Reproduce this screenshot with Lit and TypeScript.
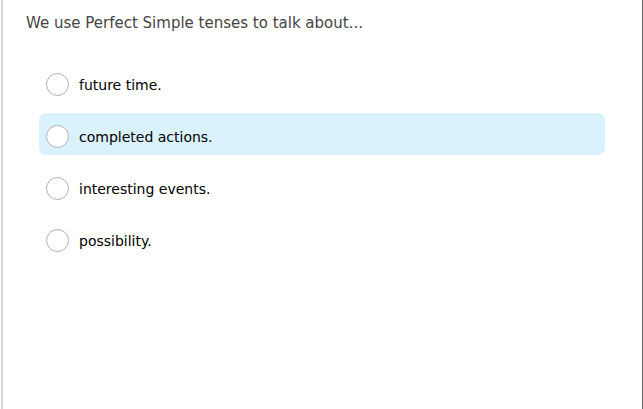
import { LitElement, html, css } from "lit";
import { customElement, state } from "lit/decorators.js";

@customElement("app-root")
export class AppRoot extends LitElement {
  static styles = css`
    :host {
      display: block;
      font-family: Verdana, "DejaVu Sans", sans-serif;
      color: #000;
      background: #fff;
    }
    .panel {
      box-sizing: border-box;
      min-height: 100vh;
      margin-left: 1px;
      padding: 13px 37px 24px 23px;
      border: 0 solid #d4d4d4;
      border-left-width: 2px;
      border-right: 1px solid #666;
    }
    fieldset {
      margin: 0;
      padding: 0;
      border: 0;
      min-width: 0;
    }
    legend {
      padding: 0;
      margin-bottom: 28px;
      font-size: 15px;
      line-height: 20px;
      color: #444;
    }
    .options {
      display: flex;
      flex-direction: column;
      gap: 10px;
      margin-left: 13px;
    }
    .option {
      box-sizing: border-box;
      display: flex;
      align-items: center;
      gap: 10px;
      height: 42px;
      padding: 5px 7px 0;
      border-radius: 7px;
      font-size: 14px;
      line-height: 20px;
      cursor: pointer;
    }
    .option span {
      padding-top: 1px;
    }
    .highlighted {
      background: #daf2fd;
    }
    .radio {
      appearance: none;
      box-sizing: border-box;
      flex: none;
      width: 23px;
      height: 23px;
      margin: 0;
      border: 1px solid #b0b0b0;
      border-radius: 50%;
      background: #fff;
      cursor: pointer;
    }
    .radio:checked {
      border: 7px solid #2196d3;
    }
  `;

  @state() private active = 1;

  private options = [
    "future time.",
    "completed actions.",
    "interesting events.",
    "possibility.",
  ];

  render() {
    return html`
      <main class="panel">
        <fieldset>
          <legend>We use Perfect Simple tenses to talk about...</legend>
          <div class="options">
            ${this.options.map(
              (text, i) => html`
                <label
                  class="option ${i === this.active ? "highlighted" : ""}"
                  @mouseenter=${() => (this.active = i)}
                >
                  <input class="radio" type="radio" name="answer" value=${i} />
                  <span>${text}</span>
                </label>
              `,
            )}
          </div>
        </fieldset>
      </main>
    `;
  }
}
